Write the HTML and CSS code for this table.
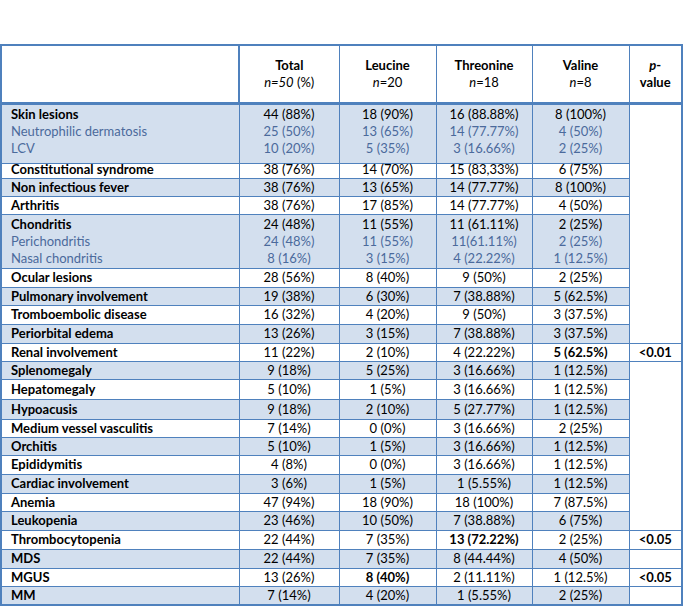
FILE: index.html
```html
<!DOCTYPE html>
<html>
<head>
<meta charset="utf-8">
<link rel="stylesheet" href="styles.css">
</head>
<body>
<table class="t">
<colgroup><col class="c1"><col class="c2"><col class="c3"><col class="c4"><col class="c5"><col class="c6"></colgroup>
<thead>
<tr class="hd">
<th class="lab"></th>
<th><span class="ln">Total</span><span class="ln nb"><i>n=50</i> (%)</span></th>
<th><span class="ln">Leucine</span><span class="ln nb"><i>n</i>=20</span></th>
<th><span class="ln">Threonine</span><span class="ln nb"><i>n</i>=18</span></th>
<th><span class="ln">Valine</span><span class="ln nb"><i>n</i>=8</span></th>
<th class="pv"><span class="ln"><i>p</i>-</span><span class="ln">value</span></th>
</tr>
</thead>
<tbody>
<tr class="sh g1">
<td class="lab"><span class="ln">Skin lesions</span><span class="ln sub">Neutrophilic dermatosis</span><span class="ln sub">LCV</span></td>
<td><span class="ln">44 (88%)</span><span class="ln sub">25 (50%)</span><span class="ln sub">10 (20%)</span></td>
<td><span class="ln">18 (90%)</span><span class="ln sub">13 (65%)</span><span class="ln sub">5 (35%)</span></td>
<td><span class="ln">16 (88.88%)</span><span class="ln sub">14 (77.77%)</span><span class="ln sub">3 (16.66%)</span></td>
<td><span class="ln">8 (100%)</span><span class="ln sub">4 (50%)</span><span class="ln sub">2 (25%)</span></td>
<td class="pv" rowspan="9"></td>
</tr>
<tr class="h14"><td class="lab">Constitutional syndrome</td><td>38 (76%)</td><td>14 (70%)</td><td>15 (83,33%)</td><td>6 (75%)</td></tr>
<tr class="sh h18"><td class="lab">Non infectious fever</td><td>38 (76%)</td><td>13 (65%)</td><td>14 (77.77%)</td><td>8 (100%)</td></tr>
<tr class="h18"><td class="lab">Arthritis</td><td>38 (76%)</td><td>17 (85%)</td><td>14 (77.77%)</td><td>4 (50%)</td></tr>
<tr class="sh g2">
<td class="lab"><span class="ln">Chondritis</span><span class="ln sub">Perichondritis</span><span class="ln sub">Nasal chondritis</span></td>
<td><span class="ln">24 (48%)</span><span class="ln sub">24 (48%)</span><span class="ln sub">8 (16%)</span></td>
<td><span class="ln">11 (55%)</span><span class="ln sub">11 (55%)</span><span class="ln sub">3 (15%)</span></td>
<td><span class="ln">11 (61.11%)</span><span class="ln sub">11(61.11%)</span><span class="ln sub">4 (22.22%)</span></td>
<td><span class="ln">2 (25%)</span><span class="ln sub">2 (25%)</span><span class="ln sub">1 (12.5%)</span></td>
</tr>
<tr class="h19"><td class="lab">Ocular lesions</td><td>28 (56%)</td><td>8 (40%)</td><td>9 (50%)</td><td>2 (25%)</td></tr>
<tr class="sh h18"><td class="lab">Pulmonary involvement</td><td>19 (38%)</td><td>6 (30%)</td><td>7 (38.88%)</td><td>5 (62.5%)</td></tr>
<tr class="h19"><td class="lab">Tromboembolic disease</td><td>16 (32%)</td><td>4 (20%)</td><td>9 (50%)</td><td>3 (37.5%)</td></tr>
<tr class="sh h19"><td class="lab">Periorbital edema</td><td>13 (26%)</td><td>3 (15%)</td><td>7 (38.88%)</td><td>3 (37.5%)</td></tr>
<tr class="h18"><td class="lab">Renal involvement</td><td>11 (22%)</td><td>2 (10%)</td><td>4 (22.22%)</td><td class="bd">5 (62.5%)</td><td class="pv bd">&lt;0.01</td></tr>
<tr class="sh h18"><td class="lab">Splenomegaly</td><td>9 (18%)</td><td>5 (25%)</td><td>3 (16.66%)</td><td>1 (12.5%)</td><td class="pv" rowspan="9"></td></tr>
<tr class="h20"><td class="lab">Hepatomegaly</td><td>5 (10%)</td><td>1 (5%)</td><td>3 (16.66%)</td><td>1 (12.5%)</td></tr>
<tr class="sh h20"><td class="lab">Hypoacusis</td><td>9 (18%)</td><td>2 (10%)</td><td>5 (27.77%)</td><td>1 (12.5%)</td></tr>
<tr class="h18"><td class="lab">Medium vessel vasculitis</td><td>7 (14%)</td><td>0 (0%)</td><td>3 (16.66%)</td><td>2 (25%)</td></tr>
<tr class="sh h18"><td class="lab">Orchitis</td><td>5 (10%)</td><td>1 (5%)</td><td>3 (16.66%)</td><td>1 (12.5%)</td></tr>
<tr class="h19"><td class="lab">Epididymitis</td><td>4 (8%)</td><td>0 (0%)</td><td>3 (16.66%)</td><td>1 (12.5%)</td></tr>
<tr class="sh h19"><td class="lab">Cardiac involvement</td><td>3 (6%)</td><td>1 (5%)</td><td>1 (5.55%)</td><td>1 (12.5%)</td></tr>
<tr class="h18"><td class="lab">Anemia</td><td>47 (94%)</td><td>18 (90%)</td><td>18 (100%)</td><td>7 (87.5%)</td></tr>
<tr class="sh h19"><td class="lab">Leukopenia</td><td>23 (46%)</td><td>10 (50%)</td><td>7 (38.88%)</td><td>6 (75%)</td></tr>
<tr class="h19"><td class="lab">Thrombocytopenia</td><td>22 (44%)</td><td>7 (35%)</td><td class="bd">13 (72.22%)</td><td>2 (25%)</td><td class="pv bd">&lt;0.05</td></tr>
<tr class="sh h19"><td class="lab">MDS</td><td>22 (44%)</td><td>7 (35%)</td><td>8 (44.44%)</td><td>4 (50%)</td><td class="pv"></td></tr>
<tr class="h18"><td class="lab">MGUS</td><td>13 (26%)</td><td class="bd">8 (40%)</td><td>2 (11.11%)</td><td>1 (12.5%)</td><td class="pv bd">&lt;0.05</td></tr>
<tr class="sh h19"><td class="lab">MM</td><td>7 (14%)</td><td>4 (20%)</td><td>1 (5.55%)</td><td>2 (25%)</td><td class="pv"></td></tr>
</tbody>
</table>
</body>
</html>
```
FILE: styles.css
```css
html, body {
  margin: 0;
  padding: 0;
  background: #ffffff;
}
body {
  font-family: Lato, "Liberation Sans", sans-serif;
  font-size: 13px;
  color: #000000;
}
.t {
  margin-top: 44px;
  border-collapse: collapse;
  table-layout: fixed;
  width: 681px;
  border: 2px solid #4f81bd;
}
.c1 { width: 238px; }
.c2 { width: 100px; }
.c3 { width: 97px; }
.c4 { width: 96px; }
.c5 { width: 97px; }
.c6 { width: 53px; }
.t th, .t td {
  border: 1px solid #4f81bd;
  padding: 0 2px;
  text-align: center;
  vertical-align: middle;
  line-height: 17px;
  font-weight: normal;
  white-space: nowrap;
}
.t th {
  font-weight: bold;
  border-bottom: 3px solid #4f81bd;
}
.t th.lab { border-right-width: 2px; }
.hd { height: 58px; }
.t .lab {
  text-align: left;
  padding-left: 9px;
  font-weight: bold;
}
.ln { display: block; }
.nb { font-weight: normal; }
.sub {
  color: #4b6a9c;
  font-weight: normal;
}
.sh td { background: #d3dfee; }
.sh td.pv, .t td.pv { background: #ffffff; }
.t td.bd { font-weight: bold; }
.g1 { height: 60px; }
.g1 td { padding-bottom: 4px; }
.g2 { height: 54px; }
.h14 { height: 14px; }
.t .h14 td { line-height: 11px; padding-bottom: 3px; }
.h18 { height: 18px; }
.h19 { height: 19px; }
.h20 { height: 20px; }
```
